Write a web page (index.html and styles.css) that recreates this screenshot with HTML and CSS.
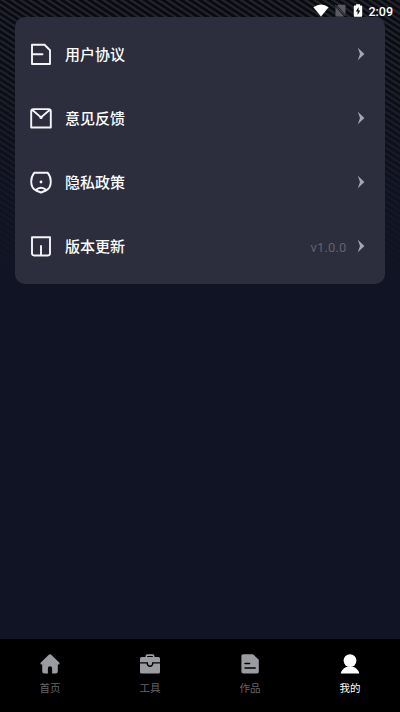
FILE: index.html
```
<!DOCTYPE html>
<html lang="zh-CN">
<head>
<meta charset="utf-8">
<title>我的</title>
<link rel="stylesheet" href="styles.css">
</head>
<body>
<div class="app">
  <header class="status">
    <svg width="16" height="13" viewBox="0 0 16 13"><path d="M0.4 3.2Q8-2.2 15.6 3.2L8 12.6Z" fill="#fff"/></svg>
    <svg class="sim" width="12" height="13" viewBox="0 0 12 13"><path d="M3.5 0.7H10.5V10.2L2.1 1.7ZM0.5 3.3L9.3 12.4H0.5Z" fill="#5a5b60"/><path d="M0.3 1L10.5 12" stroke="#5a5b60" stroke-width="0.8"/></svg>
    <svg class="battery" width="10" height="13" viewBox="0 0 10 13"><path d="M3 0.2H7V1.4H8.4Q9.2 1.4 9.2 2.2V12Q9.2 12.8 8.4 12.8H1.6Q0.8 12.8 0.8 12V2.2Q0.8 1.4 1.6 1.4H3Z" fill="#fff"/><path d="M5.6 3L2.8 7.6H4.6V11L7.3 6.4H5.6Z" fill="#11131a"/></svg>
    <time>2:09</time>
  </header>
  <main class="content">
    <ul class="card">
      <li class="row">
        <svg class="icon" viewBox="0 0 24 24"><path d="M3 2.8H15.5L21 8.2V22H3ZM3 12.3H13.5"/></svg>
        <span class="label">用户协议</span>
        <svg class="chevron" viewBox="0 0 8 14"><path d="M0.8 0.8L7.4 7L0.8 13.2L3 7Z"/></svg>
      </li>
      <li class="row">
        <svg class="icon" viewBox="0 0 24 24"><path d="M2.2 5.4Q2.2 3.1 4.5 3.1H19.5Q21.8 3.1 21.8 5.4V21.5H2.2ZM3.4 4L12 11.4L20.6 4"/><circle class="dot" cx="12" cy="11.4" r="1.6"/></svg>
        <span class="label">意见反馈</span>
        <svg class="chevron" viewBox="0 0 8 14"><path d="M0.8 0.8L7.4 7L0.8 13.2L3 7Z"/></svg>
      </li>
      <li class="row">
        <svg class="icon" viewBox="0 0 24 24"><path d="M5.2 2.8H18.8Q21.8 6.5 21.8 11.6Q21.8 18.2 17 20.5L12 22.5L7 20.5Q2.2 18.2 2.2 11.6Q2.2 6.5 5.2 2.8ZM6.6 20Q12 15.3 17.4 20"/><circle class="dot" cx="12" cy="12" r="1.4"/></svg>
        <span class="label">隐私政策</span>
        <svg class="chevron" viewBox="0 0 8 14"><path d="M0.8 0.8L7.4 7L0.8 13.2L3 7Z"/></svg>
      </li>
      <li class="row">
        <svg class="icon" viewBox="0 0 24 24"><path d="M3 3.2H21V19.4Q21 21.5 18.9 21.5H5.1Q3 21.5 3 19.4ZM12 12V21"/></svg>
        <span class="label">版本更新</span>
        <span class="version">v1.0.0</span>
        <svg class="chevron" viewBox="0 0 8 14"><path d="M0.8 0.8L7.4 7L0.8 13.2L3 7Z"/></svg>
      </li>
    </ul>
  </main>
  <nav class="tabs">
    <a class="tab">
      <svg viewBox="0 0 20 20"><path d="M8.8 0.8Q10 -0.3 11.2 0.8L19.2 8.4Q20.2 9.9 18.6 10.5H17.8V17.6Q17.8 19.6 15.8 19.6H12.1V14.2Q12.1 12.3 10 12.3Q7.9 12.3 7.9 14.2V19.6H4.2Q2.2 19.6 2.2 17.6V10.5H1.4Q-0.2 9.9 0.8 8.4Z"/></svg>
      <span>首页</span>
    </a>
    <a class="tab">
      <svg viewBox="0 0 20 20"><path fill-rule="evenodd" d="M5.5 3V2Q5.5 0.3 7.2 0.3H12.8Q14.5 0.3 14.5 2V3H18.5Q20 3 20 4.5V8.2H0V4.5Q0 3 1.5 3ZM7.2 3H12.8V2H7.2Z"/><path d="M0 9.6H6.5Q7 13 10 13Q13 13 13.5 9.6H20V18Q20 19.5 18.5 19.5H1.5Q0 19.5 0 18ZM8 8H12V9.6Q12 11.5 10 11.5Q8 11.5 8 9.6Z"/></svg>
      <span>工具</span>
    </a>
    <a class="tab">
      <svg viewBox="0 0 20 20"><path d="M3.2 0.3H13L18.8 5.7V17.8Q18.8 19.6 17 19.6H3.2Q1.4 19.6 1.4 17.8V2.1Q1.4 0.3 3.2 0.3Z"/><path class="lines" d="M5 9.6H9.6M5 14H15.2"/></svg>
      <span>作品</span>
    </a>
    <a class="tab active">
      <svg viewBox="0 0 20 20"><circle cx="10" cy="6.6" r="6.4"/><path d="M0.7 19.5Q1.4 15.5 6.1 13H13.9Q18.6 15.5 19.3 19.5Z"/></svg>
      <span>我的</span>
    </a>
  </nav>
</div>
</body>
</html>
```
FILE: styles.css
```
* { box-sizing: border-box; }
body { margin: 0; font-family: Roboto, "Noto Sans CJK SC", sans-serif; }
svg { display: block; flex: none; }
.app {
  height: 712px;
  display: flex;
  flex-direction: column;
  background:
    linear-gradient(180deg, rgba(17,20,36,0) 0, rgba(17,20,36,.35) 100px, rgba(17,20,36,.75) 190px, #111424 280px),
    repeating-linear-gradient(33deg, #090b11 0, #090b11 1.7px, #23262d 2.9px, #23262d 3.8px, #090b11 5px);
}
.status {
  height: 17px;
  padding: 4px 7px 0 0;
  display: flex;
  justify-content: flex-end;
  align-items: flex-start;
  color: #fff;
}
.sim { margin-left: 6px; }
.battery { margin-left: 6px; }
.status time { margin-left: 5px; font-size: 12.5px; line-height: 15px; font-weight: 500; }
.content { flex: 1; padding: 0 15px; }
.card {
  list-style: none;
  margin: 0;
  padding: 5px 20.5px 6px 14px;
  height: 267px;
  border-radius: 10px;
  background: #2c2e3d;
}
.row { height: 64px; display: flex; align-items: center; }
.icon { width: 24px; height: 24px; fill: none; stroke: #f4f5fa; stroke-width: 1.9; stroke-linejoin: round; stroke-linecap: round; }
.icon .dot { fill: #f4f5fa; stroke: none; }
.label { flex: 1; margin-left: 12px; padding-top: 2px; font-size: 15px; line-height: 22px; font-weight: 500; color: #fff; }
.version { margin-right: 10px; padding-top: 2px; font-size: 13px; letter-spacing: .15px; color: #61626c; }
.chevron { width: 8px; height: 14px; fill: #a5a6af; }
.tabs { height: 73px; display: flex; background: #000; }
.tab {
  flex: 1;
  padding-top: 15px;
  display: flex;
  flex-direction: column;
  align-items: center;
  font-size: 10.5px;
  line-height: 16px;
  color: #67676b;
  fill: #9b9ca2;
}
.tab svg { width: 20px; height: 20px; }
.tab span { margin-top: 7px; }
.tab.active { color: #fff; fill: #fff; }
.lines { fill: none; stroke: #000; stroke-width: 1.5; stroke-linecap: round; }
```
